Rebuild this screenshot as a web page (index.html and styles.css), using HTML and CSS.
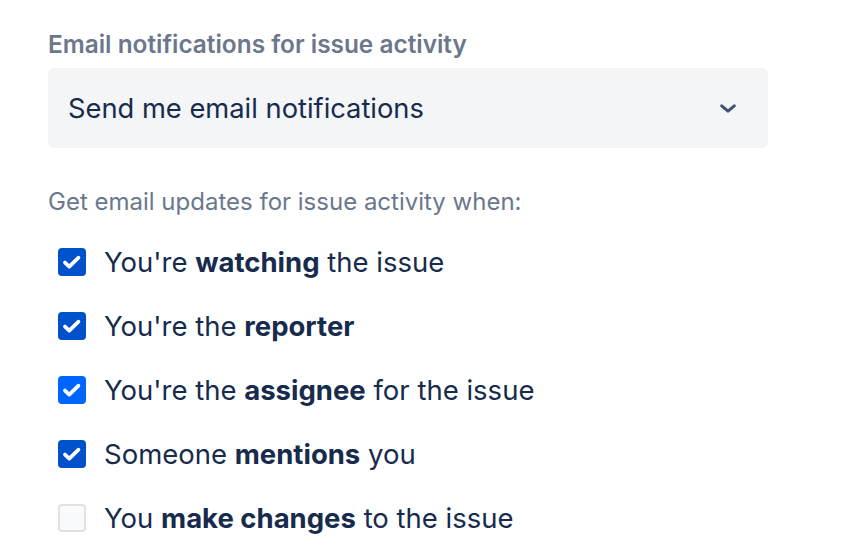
FILE: index.html
```html
<!DOCTYPE html>
<html lang="en">
  <head>
    <title>Notification settings</title>
    <link rel="stylesheet" href="styles.css">
  </head>
  <body>
    <section class="settings">
      <label class="field-label" for="email-select">Email notifications for issue activity</label>
      <div class="select" id="email-select">
        <span>Send me email notifications</span>
        <svg class="chevron" viewBox="0 0 20 12">
          <path d="M3 3l7 6 7-6" fill="none" stroke="#42526E" stroke-width="3.4" stroke-linecap="round" stroke-linejoin="round" />
        </svg>
      </div>
      <p class="helper">Get email updates for issue activity when:</p>
      <ul class="options">
        <li>
          <span class="box checked"><svg viewBox="0 0 24 24"><path d="M5.5 12.5l4 3.8 8.5-8.3" fill="none" stroke="#fff" stroke-width="3.4" stroke-linecap="round" stroke-linejoin="round"/></svg></span>
          <span>You're <b>watching</b> the issue</span>
        </li>
        <li>
          <span class="box checked"><svg viewBox="0 0 24 24"><path d="M5.5 12.5l4 3.8 8.5-8.3" fill="none" stroke="#fff" stroke-width="3.4" stroke-linecap="round" stroke-linejoin="round"/></svg></span>
          <span>You're the <b>reporter</b></span>
        </li>
        <li>
          <span class="box checked hover"><svg viewBox="0 0 24 24"><path d="M5.5 12.5l4 3.8 8.5-8.3" fill="none" stroke="#fff" stroke-width="3.4" stroke-linecap="round" stroke-linejoin="round"/></svg></span>
          <span>You're the <b>assignee</b> for the issue</span>
        </li>
        <li>
          <span class="box checked"><svg viewBox="0 0 24 24"><path d="M5.5 12.5l4 3.8 8.5-8.3" fill="none" stroke="#fff" stroke-width="3.4" stroke-linecap="round" stroke-linejoin="round"/></svg></span>
          <span>Someone <b>mentions</b> you</span>
        </li>
        <li>
          <span class="box"></span>
          <span>You <b>make changes</b> to the issue</span>
        </li>
      </ul>
    </section>
  </body>
</html>
```

FILE: styles.css
```css
body {
  margin: 0;
  background: #fff;
  font-family: Inter, "Noto Sans", sans-serif;
  color: #172B4D;
}
.settings {
  padding: 29px 90px 0 48px;
}
.field-label {
  display: block;
  font-size: 24.4px;
  font-weight: 600;
  color: #6B778C;
  line-height: 30px;
}
.select {
  margin-top: 9px;
  height: 80px;
  width: 720px;
  box-sizing: border-box;
  background: #F4F5F7;
  border-radius: 6px;
  display: flex;
  align-items: center;
  justify-content: space-between;
  padding: 0 31px 0 20px;
  font-size: 27.3px;
}
.chevron {
  width: 18px;
  height: 11px;
}
.helper {
  margin: 39px 0 0;
  font-size: 24px;
  line-height: 30px;
  color: #6B778C;
}
.options {
  list-style: none;
  margin: 13px 0 0;
  padding: 0;
}
.options li {
  display: flex;
  align-items: center;
  height: 64px;
  font-size: 27.5px;
  gap: 18px;
  padding-left: 10px;
}
.options b {
  font-weight: 700;
}
.box {
  width: 28px;
  height: 28px;
  box-sizing: border-box;
  border-radius: 4px;
  border: 2.5px solid #DFE1E6;
  background: #FAFBFC;
  display: flex;
  align-items: center;
  justify-content: center;
}
.box.checked {
  background: #0052CC;
  border-color: #0052CC;
}
.box.hover {
  background: #0065FF;
  border-color: #0065FF;
}
.box svg {
  width: 26px;
  height: 26px;
  flex: none;
}
```
